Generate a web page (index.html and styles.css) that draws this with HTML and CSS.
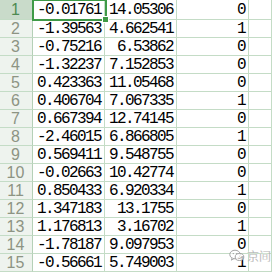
FILE: index.html
```html
<!DOCTYPE html>
<html>
<head>
<meta charset="utf-8">
<link rel="stylesheet" href="styles.css">
</head>
<body>
<div class="sheet">
  <div class="grid">
    <div class="rh sel">1</div><div class="c">-0.01761</div><div class="c">14.05306</div><div class="c">0</div><div class="e"></div>
    <div class="rh">2</div><div class="c">-1.39563</div><div class="c">4.662541</div><div class="c">1</div><div class="e"></div>
    <div class="rh">3</div><div class="c">-0.75216</div><div class="c">6.53862</div><div class="c">0</div><div class="e"></div>
    <div class="rh">4</div><div class="c">-1.32237</div><div class="c">7.152853</div><div class="c">0</div><div class="e"></div>
    <div class="rh">5</div><div class="c">0.423363</div><div class="c">11.05468</div><div class="c">0</div><div class="e"></div>
    <div class="rh">6</div><div class="c">0.406704</div><div class="c">7.067335</div><div class="c">1</div><div class="e"></div>
    <div class="rh">7</div><div class="c">0.667394</div><div class="c">12.74145</div><div class="c">0</div><div class="e"></div>
    <div class="rh">8</div><div class="c">-2.46015</div><div class="c">6.866805</div><div class="c">1</div><div class="e"></div>
    <div class="rh">9</div><div class="c">0.569411</div><div class="c">9.548755</div><div class="c">0</div><div class="e"></div>
    <div class="rh">10</div><div class="c">-0.02663</div><div class="c">10.42774</div><div class="c">0</div><div class="e"></div>
    <div class="rh">11</div><div class="c">0.850433</div><div class="c">6.920334</div><div class="c">1</div><div class="e"></div>
    <div class="rh">12</div><div class="c">1.347183</div><div class="c">13.1755</div><div class="c">0</div><div class="e"></div>
    <div class="rh">13</div><div class="c">1.176813</div><div class="c">3.16702</div><div class="c">1</div><div class="e"></div>
    <div class="rh">14</div><div class="c">-1.78187</div><div class="c">9.097953</div><div class="c">0</div><div class="e"></div>
    <div class="rh">15</div><div class="c">-0.56661</div><div class="c">5.749003</div><div class="c">1</div><div class="e"></div>
  </div>
  <div class="selbox"><span class="handle"></span></div>
  <div class="mark">
    <svg class="wx" width="16" height="13" viewBox="0 0 16 13">
      <ellipse cx="6" cy="5.5" rx="5.2" ry="4.3" fill="rgba(255,255,255,0.6)" stroke="#9a9a9a" stroke-width="0.9"/>
      <path d="M3 9 L2.4 11.2 L5 9.6" fill="rgba(255,255,255,0.6)" stroke="#9a9a9a" stroke-width="0.8"/>
      <ellipse cx="10.5" cy="8" rx="4.3" ry="3.5" fill="rgba(255,255,255,0.7)" stroke="#9a9a9a" stroke-width="0.9"/>
      <circle cx="4.3" cy="4.6" r="0.7" fill="#9a9a9a"/>
      <circle cx="7.8" cy="4.6" r="0.7" fill="#9a9a9a"/>
    </svg>
    <span class="mtext">京间</span>
  </div>
</div>
</body>
</html>
```

FILE: styles.css
```css
html, body {
  margin: 0;
  padding: 0;
  background: #ffffff;
}
.sheet {
  position: relative;
  width: 272px;
  height: 274px;
  overflow: hidden;
  background: #ffffff;
}
.grid {
  display: grid;
  grid-template-columns: 33px 72px 72px 72px 1fr;
  grid-template-rows: 20px repeat(14, 18px) 1fr;
  height: 274px;
}
.grid > div {
  box-sizing: border-box;
  border-bottom: 1px solid #c4dcc6;
  border-right: 1px solid #c4dcc6;
}
.rh {
  background: #eef3ee;
  color: #8d9483;
  font-family: "Liberation Sans", Arial, sans-serif;
  font-size: 16px;
  line-height: 17px;
  text-align: center;
  padding-right: 1px;
  border-right-color: #b5d0b7 !important;
}
.rh.sel {
  background: #c9dbca;
  color: #4d8a52;
  line-height: 19px;
}
.c {
  font-family: "Liberation Mono", "Courier New", monospace;
  font-size: 16px;
  letter-spacing: -1.6px;
  color: #000;
  text-align: right;
  padding-right: 3px;
  line-height: 18px;
  white-space: nowrap;
  overflow: hidden;
}
.grid > .c:nth-child(2), .grid > .c:nth-child(3), .grid > .c:nth-child(4) {
  line-height: 20px;
}
.selbox {
  position: absolute;
  left: 32px;
  top: -1px;
  width: 75px;
  height: 22px;
  box-sizing: border-box;
  border: 2px solid #3f9a47;
}
.handle {
  position: absolute;
  right: -4px;
  bottom: -4px;
  width: 5px;
  height: 5px;
  background: #3f9a47;
  border: 1px solid #ffffff;
}
.mark {
  position: absolute;
  left: 229px;
  top: 249px;
  display: flex;
  align-items: center;
  gap: 2px;
}
.mtext {
  font-family: "Noto Sans CJK SC", sans-serif;
  font-size: 12px;
  line-height: 13px;
  color: rgba(120,120,120,0.75);
  -webkit-text-stroke: 0.3px rgba(255,255,255,0.8);
}
```
